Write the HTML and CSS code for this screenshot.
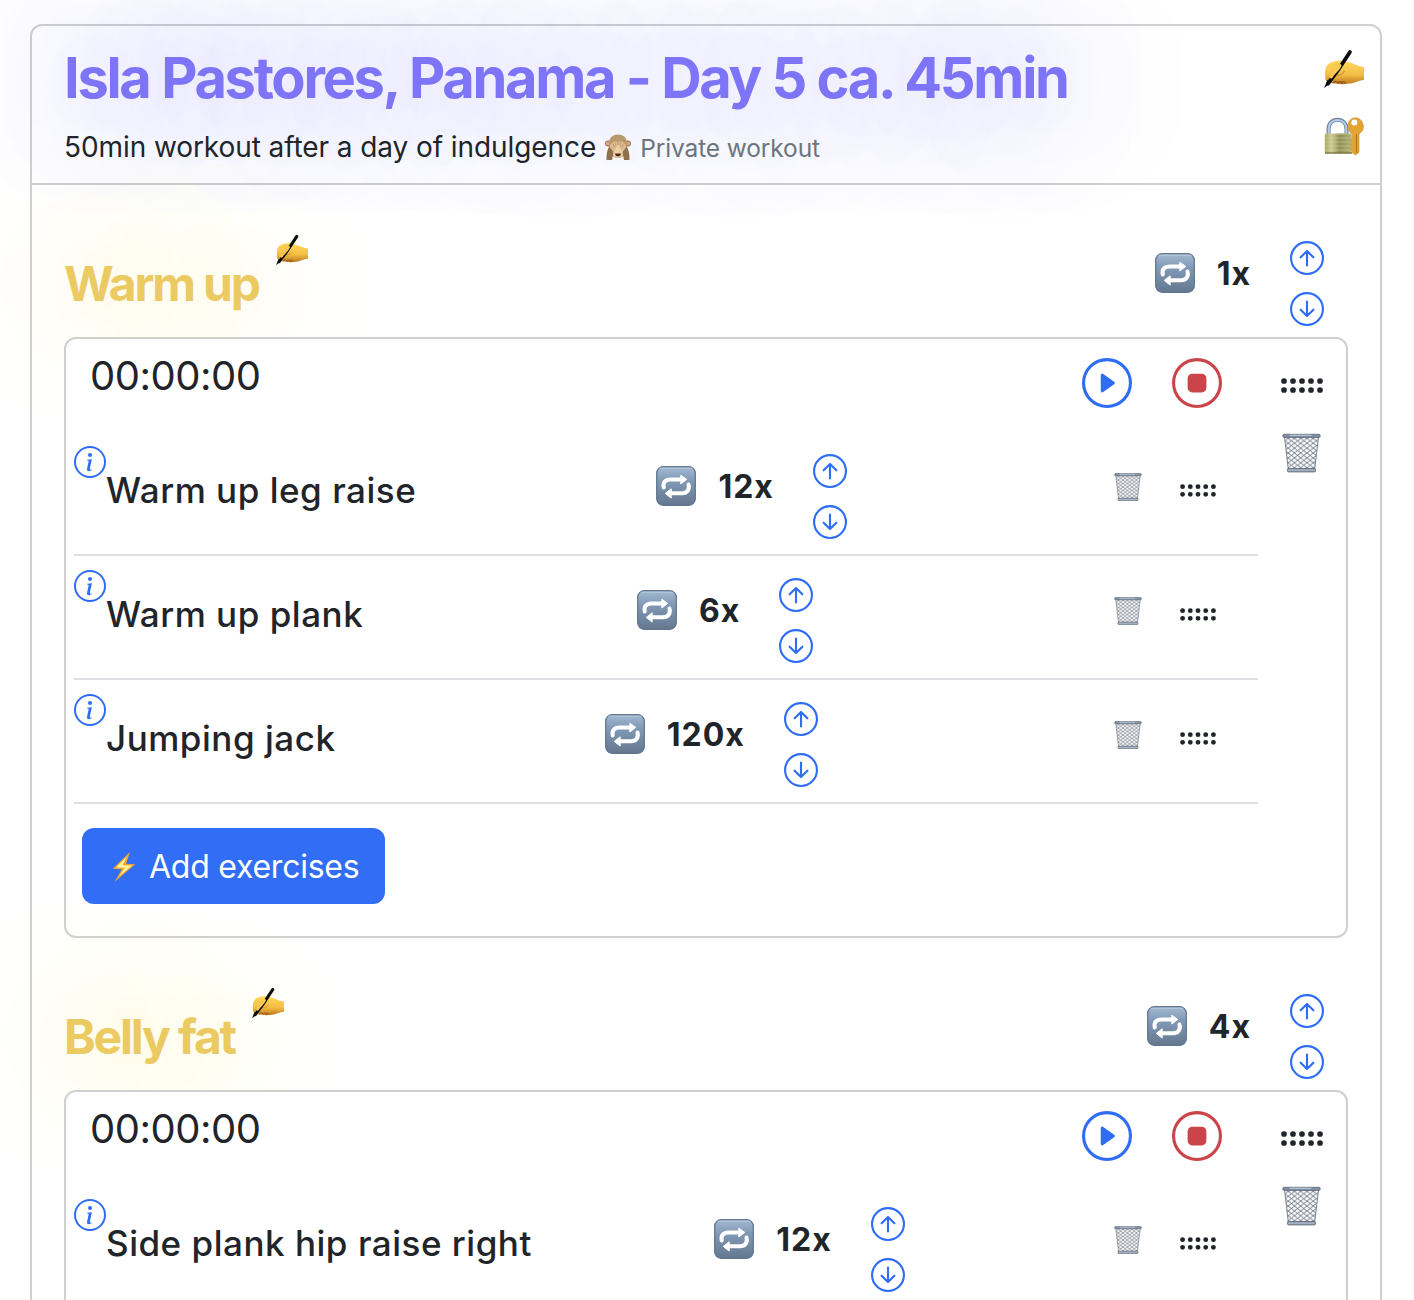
FILE: index.html
```html
<!DOCTYPE html>
<html lang="en">
<head>
<meta charset="utf-8">
<title>Workout</title>
<link rel="stylesheet" href="styles.css">
</head>
<body>
<svg class="sprite" aria-hidden="true">
  <defs>
    <linearGradient id="g-tile" x1="0" y1="0" x2="0" y2="1"><stop offset="0" stop-color="#a3b9d2"/><stop offset=".35" stop-color="#819ab7"/><stop offset="1" stop-color="#64788f"/></linearGradient>
    <linearGradient id="g-hand" x1="0" y1="0" x2="0" y2="1"><stop offset="0" stop-color="#ffd95e"/><stop offset=".6" stop-color="#f5bd45"/><stop offset="1" stop-color="#b9771f"/></linearGradient>
    <linearGradient id="g-lock" x1="0" y1="0" x2="1" y2="0"><stop offset="0" stop-color="#a5a66a"/><stop offset=".25" stop-color="#cdcc95"/><stop offset=".55" stop-color="#8f9056"/><stop offset="1" stop-color="#b1b177"/></linearGradient>
    <pattern id="p-mesh" width="6.4" height="5" patternUnits="userSpaceOnUse"><path d="M0 0 6.400 5M6.400 0 0 5" stroke="#55606d" stroke-width=".8"/></pattern>
    <symbol id="repeat" viewBox="0 0 40 40">
      <rect x=".7" y=".7" width="38.6" height="38.6" rx="6.5" fill="url(#g-tile)" stroke="#62778f" stroke-width="1.3"/>
      <path d="M4 2.300h32" stroke="#b5c7da" stroke-width="1" stroke-linecap="round"/>
      <path d="M7.800 21.500C6.500 16.500 9.500 13.400 14.500 13.400H26M32.500 18.500c1.500 5-1.500 8.700-6.500 8.700H14" fill="none" stroke="#fff" stroke-width="4" stroke-linecap="round"/>
      <path d="M24.800 9.200 30.800 13.400l-6 4.600zM15.200 22.800 9.200 27.400l6 4.700z" fill="#fff" stroke="#fff" stroke-linejoin="round"/>
    </symbol>
    <symbol id="write" viewBox="0 0 40 40">
      <path d="M1.500 30C.5 23 1 17 5 14.500c4-2.800 9-3.300 14-2.500l7 1.600c5 1.500 8 4 14 4.400V31c-6 .500-10 3.500-15 3.600-3 .4-5 .900-8 .6l-8-1C5 34 2 33 1.500 30z" fill="url(#g-hand)"/>
      <path d="M9 34c2-2.200 4-2 5 .4M14 33.500c2-1.500 4-1 4 1.500M18 33c2-.800 3.500.500 3.500 1.800" fill="none" stroke="#8f4f14" stroke-width="1.200"/>
      <path d="M12 25.500c3 1.500 7-.5 8.500-3.500" fill="none" stroke="#d1902a" stroke-width="1.200"/>
      <path d="m26 3-12.500 19L4 34.500" fill="none" stroke="#0b0b0b" stroke-width="3.800" stroke-linecap="round"/>
      <path d="M3.500 31 0 39l6.500-4.500z" fill="#0b0b0b"/>
      <path d="M5.500 21c2.500-4.500 6.500-6.500 10.500-4.500M15.500 17c0 3-6 6-8.500 11" fill="none" stroke="#f9cb52" stroke-width="3" stroke-linecap="round"/>
    </symbol>
    <symbol id="lock" viewBox="0 0 40 40">
      <path d="M4.500 18v-5.500C4.500 6 8.500 2.700 13.500 2.700s9 3.300 9 9.800V18" fill="none" stroke="#73849b" stroke-width="4"/>
      <path d="M4.700 18v-5.500C4.700 6 8.700 3 13.500 3s8.800 3 8.800 9.500V18" fill="none" stroke="#b4cbea" stroke-width="2"/>
      <rect x=".800" y="16.500" width="27" height="20" rx="1" fill="url(#g-lock)"/>
      <path d="M1 17.200h26M1 21h26M1 25h26M1 29h26M1 33h26" stroke="#d8d9a0" stroke-width=".500"/>
      <path d="M1 36h27" stroke="#777843" stroke-width="1.300"/>
      <path d="M30.500.700a8.700 8.700 0 0 1 4.500 16.200v18.400L31.500 38l-3-2v-2l-2.200-2 2.200-2-2.200-2 2.200-2-2.200-2.500 2.200-2v-4.600A8.700 8.700 0 0 1 30.500.700z" fill="#e2a432" stroke="#c98c29" stroke-width=".600"/>
      <circle cx="30.300" cy="5.400" r="3" fill="#fff"/><path d="M32.500 17v19" stroke="#b87517" stroke-width="1.100"/>
    </symbol>
    <symbol id="monkey" viewBox="0 0 26 26">
      <circle cx="3" cy="9.500" r="3" fill="#a38159"/><circle cx="23" cy="9.500" r="3" fill="#a38159"/>
      <circle cx="2.700" cy="9.500" r="1.700" fill="#e6a68c"/><circle cx="23.300" cy="9.500" r="1.700" fill="#e6a68c"/>
      <path d="M13 .500c6 0 9 3.500 9 9 1 7-2 14.500-9 14.500S3 16.500 4 9.500c0-5.500 3-9 9-9z" fill="#b79a6c"/>
      <ellipse cx="13" cy="17.500" rx="6" ry="6.500" fill="#ead1a2"/>
      <path d="M10 19.500h6c0 4-6 4-6 0z" fill="#4b2b21"/>
      <path d="M1.500 26c0-6 .500-11 4-15l3 7-1.500 8zM24.500 26c0-6-.500-11-4-15l-3 7 1.500 8z" fill="#8e704c"/>
      <path d="M4.500 13c1-4.500 5-6.500 8-5 .5 2.500-.5 6-4.500 9.500zM21.500 13c-1-4.500-5-6.500-8-5-.5 2.500.5 6 4.500 9.500z" fill="#dcb991"/>
      <path d="m8 9.500 1 4M10.500 8.500l.3 4M15.500 8.500l-.3 4M18 9.500l-1 4" stroke="#b08d68" stroke-width=".600"/>
    </symbol>
    <symbol id="trash" viewBox="0 0 40 40">
      <path d="m2.500 3 4 34h27l4-34z" fill="#fafbfc"/><path d="m2.500 3 4 34h27l4-34z" fill="url(#p-mesh)"/>
      <path d="m2.500 3 4 34M37.500 3l-4 34" stroke="#75818e" stroke-width="1"/>
      <rect x=".800" y=".800" width="38.400" height="3.200" rx="1.400" fill="#8392a3" stroke="#4c5865" stroke-width=".700"/><path d="M8 1.800h22" stroke="#c2d5e8"/>
      <rect x="5.600" y="36" width="28.800" height="3.400" rx="1.300" fill="#a1b1c1" stroke="#4b5662" stroke-width=".800"/>
    </symbol>
    <symbol id="bolt" viewBox="0 0 24 32">
      <path d="M18 1 .700 17.700l9 .800L2.500 31 23.300 13.300l-9.200-.500z" fill="#f2a52c"/><path d="M15 5.500 4 16.500l9 .300L7 25.500l13-11-9.500-.300z" fill="#fff3a0"/>
    </symbol>
    <symbol id="up" viewBox="0 0 16 16"><circle cx="8" cy="8" r="7.500" fill="none" stroke="currentColor"/><path d="M8 11.500V4.700M5 7.700l3-3 3 3" fill="none" stroke="currentColor" stroke-linecap="round" stroke-linejoin="round"/></symbol>
    <symbol id="down" viewBox="0 0 16 16"><circle cx="8" cy="8" r="7.500" fill="none" stroke="currentColor"/><path d="M8 4.500v6.800M5 8.300l3 3 3-3" fill="none" stroke="currentColor" stroke-linecap="round" stroke-linejoin="round"/></symbol>
    <symbol id="info" viewBox="0 0 16 16"><circle cx="8" cy="8" r="7.500" fill="none" stroke="currentColor"/><path fill="currentColor" d="m8.930 6.588-2.290.287-.082.380.450.083c.294.070.352.176.288.469l-.738 3.468c-.194.897.105 1.319.808 1.319.545 0 1.178-.252 1.465-.598l.088-.416c-.200.176-.492.246-.686.246-.275 0-.375-.193-.304-.533zM9 4.500a1 1 0 1 1-2 0 1 1 0 0 1 2 0"/></symbol>
    <symbol id="play" viewBox="0 0 16 16"><circle cx="8" cy="8" r="7.500" fill="none" stroke="currentColor"/><path fill="currentColor" d="M6.271 5.055a.5.5 0 0 1 .520.038l3.500 2.500a.5.5 0 0 1 0 .814l-3.500 2.500A.5.5 0 0 1 6 10.500v-5a.5.5 0 0 1 .271-.445"/></symbol>
    <symbol id="stop" viewBox="0 0 16 16"><circle cx="8" cy="8" r="7.500" fill="none" stroke="currentColor"/><rect x="5" y="5" width="6" height="6" rx="1.500" fill="currentColor"/></symbol>
    <symbol id="dots" viewBox="0 0 42 15"><path d="M3 3h37M3 12h37" stroke="currentColor" stroke-width="5.700" stroke-linecap="round" stroke-dasharray="0 9"/></symbol>
  </defs>
</svg>

<main class="workout">
  <header class="workout-header">
    <div>
      <h1 class="workout-title">Isla Pastores, Panama - Day 5 ca. 45min</h1>
      <p class="summary"><span class="summary-text">50min workout after a day of indulgence</span><svg class="monkey"><use href="#monkey"/></svg><span class="privacy">Private workout</span></p>
    </div>
    <div class="header-actions"><svg class="icon-lg"><use href="#write"/></svg><svg class="icon-lg"><use href="#lock"/></svg></div>
  </header>

  <section>
    <div class="section-head">
      <div class="section-name"><h2 class="section-title">Warm up</h2><svg class="edit"><use href="#write"/></svg></div>
      <div class="reps"><svg class="repeat"><use href="#repeat"/></svg><span class="count">1x</span><div class="arrows"><svg class="arrow"><use href="#up"/></svg><svg class="arrow"><use href="#down"/></svg></div></div>
    </div>
    <div class="panel">
      <div class="panel-main">
        <div class="timer"><span class="clock">00:00:00</span><div class="controls"><svg class="control play"><use href="#play"/></svg><svg class="control stop"><use href="#stop"/></svg></div></div>
        <div class="exercise">
          <div class="exercise-name"><svg class="info"><use href="#info"/></svg><h3 class="name">Warm up leg raise</h3></div>
          <div class="reps"><svg class="repeat"><use href="#repeat"/></svg><span class="count">12x</span><div class="arrows"><svg class="arrow"><use href="#up"/></svg><svg class="arrow"><use href="#down"/></svg></div></div>
          <div class="row-tools"><svg class="trash-sm"><use href="#trash"/></svg><svg class="dots-sm"><use href="#dots"/></svg></div>
        </div>
        <div class="exercise">
          <div class="exercise-name"><svg class="info"><use href="#info"/></svg><h3 class="name">Warm up plank</h3></div>
          <div class="reps"><svg class="repeat"><use href="#repeat"/></svg><span class="count">6x</span><div class="arrows"><svg class="arrow"><use href="#up"/></svg><svg class="arrow"><use href="#down"/></svg></div></div>
          <div class="row-tools"><svg class="trash-sm"><use href="#trash"/></svg><svg class="dots-sm"><use href="#dots"/></svg></div>
        </div>
        <div class="exercise">
          <div class="exercise-name"><svg class="info"><use href="#info"/></svg><h3 class="name">Jumping jack</h3></div>
          <div class="reps"><svg class="repeat"><use href="#repeat"/></svg><span class="count">120x</span><div class="arrows"><svg class="arrow"><use href="#up"/></svg><svg class="arrow"><use href="#down"/></svg></div></div>
          <div class="row-tools"><svg class="trash-sm"><use href="#trash"/></svg><svg class="dots-sm"><use href="#dots"/></svg></div>
        </div>
        <button class="add"><svg class="bolt"><use href="#bolt"/></svg><span>Add exercises</span></button>
      </div>
      <div class="panel-side"><svg class="dots-lg"><use href="#dots"/></svg><svg class="trash-lg"><use href="#trash"/></svg></div>
    </div>
  </section>

  <section>
    <div class="section-head">
      <div class="section-name"><h2 class="section-title">Belly fat</h2><svg class="edit"><use href="#write"/></svg></div>
      <div class="reps"><svg class="repeat"><use href="#repeat"/></svg><span class="count">4x</span><div class="arrows"><svg class="arrow"><use href="#up"/></svg><svg class="arrow"><use href="#down"/></svg></div></div>
    </div>
    <div class="panel">
      <div class="panel-main">
        <div class="timer"><span class="clock">00:00:00</span><div class="controls"><svg class="control play"><use href="#play"/></svg><svg class="control stop"><use href="#stop"/></svg></div></div>
        <div class="exercise">
          <div class="exercise-name"><svg class="info"><use href="#info"/></svg><h3 class="name">Side plank hip raise right</h3></div>
          <div class="reps"><svg class="repeat"><use href="#repeat"/></svg><span class="count">12x</span><div class="arrows"><svg class="arrow"><use href="#up"/></svg><svg class="arrow"><use href="#down"/></svg></div></div>
          <div class="row-tools"><svg class="trash-sm"><use href="#trash"/></svg><svg class="dots-sm"><use href="#dots"/></svg></div>
        </div>
      </div>
      <div class="panel-side"><svg class="dots-lg"><use href="#dots"/></svg><svg class="trash-lg"><use href="#trash"/></svg></div>
    </div>
  </section>
</main>
</body>
</html>
```
FILE: styles.css
```css
* { box-sizing: border-box; }
body {
  margin: 0;
  height: 1300px;
  overflow: hidden;
  padding: 24px 32px 0 30px;
  background: #fff;
  color: #212529;
  font-family: Inter, "Liberation Sans", sans-serif;
}
h1, h2, h3, p { margin: 0; white-space: nowrap; }
svg { display: block; flex: none; }
.sprite { position: absolute; width: 0; height: 0; }

.workout { border: 2px solid #d0d0d0; border-radius: 12px; }
.workout-header {
  display: flex;
  justify-content: space-between;
  height: 159px;
  padding: 18px 16px 0 32px;
  border-bottom: 2px solid #d0d0d0;
}
.workout-title {
  font-size: 56px;
  line-height: 68px;
  font-weight: 700;
  letter-spacing: -2.3px;
  word-spacing: .6px;
  color: #7d74f8;
  text-shadow: 0 0 120px #7d74f8;
}
.summary { display: flex; align-items: center; margin-top: 13px; line-height: 42px; }
.summary-text { font-size: 28px; letter-spacing: -.08px; }
.monkey { width: 26px; height: 26px; margin: 0 9px; }
.privacy { padding-top: 2px; font-size: 24.5px; letter-spacing: -.12px; color: #6c757d; }
.header-actions { display: flex; flex-direction: column; gap: 28px; padding-top: 5px; }
.icon-lg { width: 40px; height: 40px; }

.section-head { display: flex; justify-content: space-between; height: 152px; padding: 49px 56px 0 32px; }
.section-name { display: flex; gap: 17px; }
.section-title {
  position: relative;
  margin-top: 21px;
  font-size: 48px;
  line-height: 58px;
  font-weight: 700;
  letter-spacing: -2.2px;
  color: #ecca62;
  text-shadow: 0 0 120px #ecca62;
}
.edit { width: 32px; height: 32px; }
.section-head .reps { margin-top: 7px; }

.reps { display: flex; height: 85px; }
.repeat { width: 40px; height: 40px; margin-top: 12px; }
.count { margin: 13px 39px 0 22px; font-size: 32px; line-height: 40px; font-weight: 700; letter-spacing: 1px; }
.arrows { display: flex; flex-direction: column; gap: 17px; color: #2f6df6; }
.arrow { width: 34px; height: 34px; }

.panel { position: relative; display: flex; margin: 0 32px; border: 2px solid #d0d0d0; border-radius: 12px; background: #fff; }
.panel-main { width: 1192px; padding: 0 0 32px 8px; }
.panel-side { flex: 1; display: flex; flex-direction: column; align-items: center; gap: 40px; padding-top: 39px; }
.dots-lg { width: 42px; height: 15px; }
.trash-lg { width: 39px; height: 40px; margin-right: 2px; }

.timer { display: flex; justify-content: space-between; height: 93px; padding: 12px 36px 0 16px; }
.clock { font-size: 40px; line-height: 50px; letter-spacing: -.5px; }
.controls { display: flex; gap: 40px; padding-top: 7px; }
.control { width: 50px; height: 50px; }
.play { color: #2f6df6; }
.stop { color: #cb444a; }

.exercise { display: flex; justify-content: space-between; height: 124px; padding-right: 42px; border-bottom: 2px solid #dee0e4; }
.exercise-name { display: flex; padding-top: 14px; }
.info { width: 32px; height: 32px; color: #2f6df6; }
.name { margin-top: 23px; font-size: 35px; line-height: 42px; font-weight: 500; letter-spacing: .52px; }
.exercise .reps { margin-top: 22px; }
.row-tools { display: flex; gap: 38px; padding: 41px 0 0 27px; }
.trash-sm { width: 28px; height: 28px; }
.dots-sm { width: 36px; height: 13px; margin-top: 11px; }

.add {
  display: flex;
  align-items: center;
  gap: 13px;
  width: 303px;
  height: 76px;
  margin: 24px 0 0 8px;
  padding: 1px 0 0 30px;
  border: 0;
  border-radius: 12px;
  background: #316df5;
  color: #fff;
  font: 400 32px/40px Inter, "Liberation Sans", sans-serif;
  letter-spacing: -.25px;
  white-space: nowrap;
}
.bolt { width: 24px; height: 32px; }
```
